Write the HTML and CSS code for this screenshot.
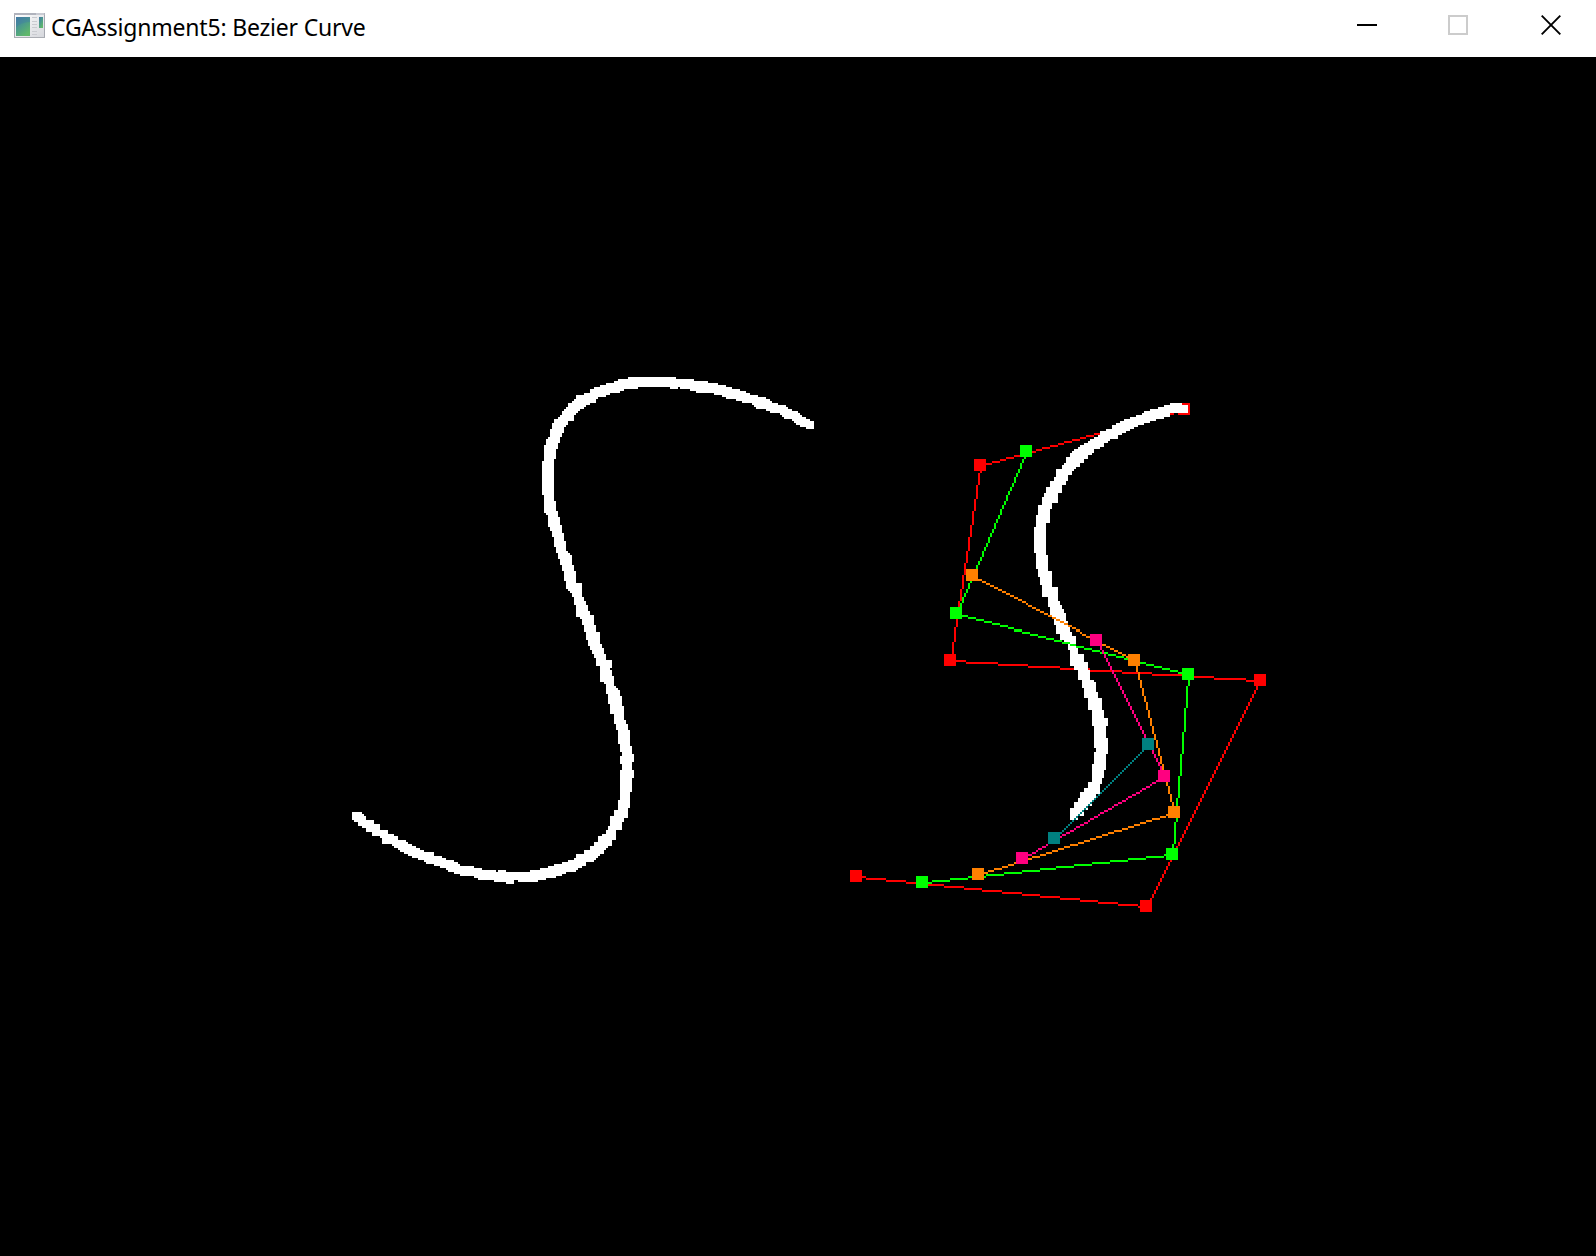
FILE: index.html
```html
<!DOCTYPE html>
<html lang="en">
<head>
<meta charset="utf-8">
<title>CGAssignment5: Bezier Curve</title>
<link rel="stylesheet" href="styles.css">
</head>
<body>
<div class="window">
  <header class="titlebar">
    <svg class="app-icon" width="32" height="26" viewBox="0 0 32 26" aria-hidden="true">
      <defs>
        <linearGradient id="pane" x1="0" y1="0" x2="0.6" y2="1">
          <stop offset="0" stop-color="#4377a5"/>
          <stop offset="0.5" stop-color="#4b9a8c"/>
          <stop offset="1" stop-color="#60b86b"/>
        </linearGradient>
        <linearGradient id="frame" x1="0" y1="0" x2="1" y2="1">
          <stop offset="0" stop-color="#ffffff"/>
          <stop offset="1" stop-color="#d5d7dc"/>
        </linearGradient>
      </defs>
      <rect x="0.5" y="0.5" width="30" height="24" fill="url(#frame)" stroke="#a5a8b0"/>
      <path d="M0 1h31" stroke="#b0b3bd" stroke-width="2"/>
      <path d="M22 1h8" stroke="#e2e3e8"/>
      <path d="M0 24.5h31" stroke="#aaadb3"/>
      <rect x="2" y="4" width="14" height="19" fill="url(#pane)"/>
      <path d="M2 14q6-5 14-5v-5h-14z" fill="#417ca5" opacity="0.4"/>
      <path d="M18 4.500h5M18 8.500h5M18 11.500h5M18 14.500h5M18 18.500h5M18 21.500h5" stroke="#c9cbd0"/>
      <rect x="25" y="4" width="4" height="11" fill="url(#pane)"/>
    </svg>
    <h1 class="title">CGAssignment5: Bezier Curve</h1>
    <div class="controls">
      <svg class="control" viewBox="0 0 20 20"><path d="M0 10h20" stroke="#000" stroke-width="2"/></svg>
      <svg class="control" viewBox="0 0 20 20"><rect x="1" y="1" width="18" height="18" fill="none" stroke="#ccc" stroke-width="2"/></svg>
      <svg class="control" viewBox="0 0 20 20"><path d="M0.700 0.700L19.300 19.300M19.300 0.700L0.700 19.300" stroke="#000" stroke-width="1.900"/></svg>
    </div>
  </header>
  <canvas class="viewport" id="viewport" width="1596" height="1199"></canvas>
</div>
<script src="curve.js"></script>
</body>
</html>
```
FILE: styles.css
```css
html,
body {
  margin: 0;
  background: #000;
}

.window {
  display: flex;
  flex-direction: column;
  width: 1596px;
  height: 1256px;
  overflow: hidden;
}

.titlebar {
  display: flex;
  box-sizing: border-box;
  height: 57px;
  padding: 13px 35px 0 14px;
  background: #fff;
}

.app-icon {
  flex: none;
}

.title {
  margin: -3px 0 0 5px;
  color: #000;
  font: 400 23px/34px "Noto Sans", "Open Sans", sans-serif;
  letter-spacing: -0.2px;
  white-space: nowrap;
}

.controls {
  display: flex;
  gap: 72px;
  margin: 2px 0 0 auto;
}

.control {
  width: 20px;
  height: 20px;
  overflow: visible;
}

.control:first-child {
  margin-right: -1px;
}

.control:last-child {
  margin-left: 1px;
}

.viewport {
  display: block;
  flex: none;
}
```
FILE: curve.js
```js
// Coordinates are window pixels; the drawing area begins below the title bar.
const TOP = 57;
const SEAM = 632;
const ctx = document.getElementById('viewport').getContext('2d');
ctx.fillStyle = '#000';
ctx.fillRect(0, 0, 1596, 1199);
ctx.translate(0, -TOP);

const toRow = y => (y < SEAM ? (y - TOP) / 2 : (y - TOP - 1) / 2);

function plot(col, row) {
  const y = TOP + row * 2 + (row > 286 ? 1 : 0);
  ctx.fillRect(col * 2, y, 2, row === 286 ? 3 : 2);
}

function line(a, b) {
  const c0 = (a[0] + 6) / 2, r0 = toRow(a[1]) + 3;
  const dc = (b[0] + 6) / 2 - c0, dr = toRow(b[1]) + 3 - r0;
  const n = Math.max(Math.abs(dc), Math.abs(dr));
  for (let i = 0; i <= n; i++) {
    plot(Math.round(c0 + dc * i / n), Math.round(r0 + dr * i / n));
  }
}

// Control polygon: connecting lines with a 12px handle on every point.
function polygon(color, points) {
  ctx.fillStyle = color;
  for (let i = 1; i < points.length; i++) line(points[i - 1], points[i]);
  for (const [x, y] of points) ctx.fillRect(x, y, 12, 12);
}

const finished = `M628 377V379H618V381H614V383H606V385H600V387H594V389H590V393H584V395H576V399H574V401H572V403H568V407H566V409H564V411H562V415H560V417H558V419H554V423H552V429H550V437H548V439H546V445H544V461H542V495H544V513H546V515H548V527H550V531H552V537H554V547H556V553H558V559H560V565H562V571H564V581H566V589H568V591H570V593H572V597H574V605H576V617H580V619H582V625H584V632H586V640H588V646H590V650H592V654H594V658H596V666H600V682H604V684H606V694H608V704H610V714H614V724H616V730H618V744H620V752H622V756H620V764H622V770H620V800H618V810H614V816H610V826H608V830H606V834H602V836H598V842H594V846H590V850H584V854H576V858H574V860H568V862H562V864H554V866H548V868H540V870H530V872H506V870H498V872H496V870H482V868H474V866H460V864H458V862H454V860H446V858H442V856H434V852H424V850H420V848H416V846H412V844H408V842H406V840H398V836H394V834H388V830H380V824H374V820H366V816H364V814H362V812H352V820H354V822H358V826H362V828H366V832H372V836H380V838H382V844H392V846H394V848H398V850H400V852H404V854H408V856H412V858H418V860H424V862H426V864H434V866H440V868H446V870H448V872H454V874H460V876H474V878H478V880H494V882H506V884H514V880H518V882H538V880H546V878H556V876H562V874H566V872H576V870H578V868H582V866H586V862H594V860H596V858H598V856H600V854H604V850H606V848H608V846H612V840H616V830H622V822H624V818H628V808H630V792H632V778H634V770H632V762H634V754H632V746H630V730H628V724H626V720H624V706H622V696H620V690H618V688H616V686H614V676H612V670H610V668H612V660H606V654H604V648H602V644H600V632H596V625H594V615H590V611H588V605H586V601H584V597H582V583H576V571H574V565H572V555H570V553H568V551H566V541H564V533H562V525H560V517H558V511H556V501H554V459H556V449H558V443H560V437H562V433H564V427H566V425H568V421H574V415H576V413H578V411H580V409H584V407H586V405H590V403H596V399H598V397H606V395H610V393H620V391H624V389H638V387H670V389H678V387H680V389H690V391H696V393H714V395H722V397H726V399H736V401H742V403H752V405H754V407H756V409H766V411H770V413H780V415H782V417H784V419H792V421H794V423H796V425H800V427H806V429H814V421H810V419H806V417H802V415H800V413H798V411H792V409H788V407H786V405H778V403H772V401H770V399H766V397H758V395H750V393H746V391H740V389H732V387H726V385H718V383H708V381H694V379H676V377Z`;

const growing = `M1170 403H1182V405H1188V413H1170V417H1164V419H1156V421H1150V423H1144V425H1138V427H1134V429H1130V431H1126V433H1122V435H1118V439H1110V441H1108V443H1104V447H1100V449H1094V453H1092V455H1088V459H1084V463H1080V467H1076V469H1074V471H1072V475H1068V481H1066V485H1062V493H1058V503H1052V509H1050V523H1046V555H1048V571H1052V587H1058V601H1060V605H1062V609H1064V613H1066V621H1068V627H1070V632H1072V636H1076V646H1078V654H1084V662H1088V670H1090V680H1094V682H1096V692H1098V698H1102V710H1104V718H1108V726H1106V738H1108V754H1106V770H1104V778H1102V784H1100V794H1096V798H1094V802H1092V806H1088V810H1084V816H1078V820H1070V808H1074V802H1078V798H1080V792H1084V788H1088V782H1092V764H1094V752H1096V748H1094V726H1092V710H1088V698H1084V688H1082V680H1078V670H1074V666H1070V650H1068V644H1064V640H1060V634H1056V625H1054V617H1050V607H1048V597H1042V585H1040V577H1038V569H1036V553H1034V527H1036V515H1038V505H1042V497H1044V493H1046V487H1050V481H1054V477H1056V469H1062V465H1064V463H1066V457H1070V453H1072V451H1074V449H1078V447H1080V445H1084V443H1088V441H1090V439H1094V437H1098V435H1100V431H1106V429H1112V425H1116V423H1120V421H1124V419H1130V417H1136V415H1142V413H1144V411H1150V409H1158V407H1164V405H1170Z`;

function curve(outline) {
  ctx.fillStyle = '#fff';
  ctx.fill(new Path2D(outline));
}

polygon('#ff0000', [[850, 870], [1140, 900], [1254, 674], [944, 654], [974, 459], [1178, 403]]);
curve(finished);
curve(growing);
polygon('#00ff00', [[916, 876], [1166, 848], [1182, 668], [950, 607], [1020, 445]]);
polygon('#ff8000', [[972, 868], [1168, 806], [1128, 654], [966, 569]]);
polygon('#ff0080', [[1016, 852], [1158, 770], [1090, 634]]);
polygon('#008080', [[1048, 832], [1142, 738]]);
```
